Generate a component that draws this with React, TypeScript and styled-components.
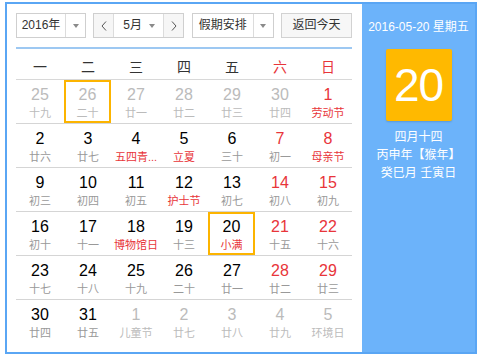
import React from 'react';
import styled, { createGlobalStyle } from 'styled-components';

const GlobalStyle = createGlobalStyle`
  html, body {
    margin: 0;
    padding: 0;
    background: #fff;
  }
  body {
    font-family: "Liberation Sans", "Noto Sans CJK SC", sans-serif;
  }
`;

const Widget = styled.div`
  display: flex;
  box-sizing: border-box;
  width: 472px;
  height: 352px;
  margin: 2px 0 0 5px;
  border: 2px solid #5aa6f4;
`;

const Main = styled.div`
  width: 355px;
  box-sizing: border-box;
  padding: 9px 10px 0 9px;
  background: #fff;
`;

const Toolbar = styled.div`
  display: flex;
  justify-content: space-between;
  height: 25px;
`;

const Box = styled.div<{ $w: number }>`
  display: flex;
  box-sizing: border-box;
  width: ${({ $w }) => $w}px;
  height: 25px;
  border: 1px solid #cfcfcf;
  background: #fff;
  font-size: 12px;
  color: #333;
`;

const BoxLabel = styled.div`
  flex: 1;
  text-align: center;
  line-height: 23px;
`;

const ArrowCell = styled.div`
  display: flex;
  align-items: center;
  justify-content: center;
  width: 19px;
  border-left: 1px solid #dcdcdc;
`;

const Caret = styled.span`
  width: 0;
  height: 0;
  border-left: 3px solid transparent;
  border-right: 3px solid transparent;
  border-top: 4px solid #8a8a8a;
`;

const NavButton = styled.div<{ $side: 'left' | 'right' }>`
  display: flex;
  align-items: center;
  justify-content: center;
  width: 19px;
  background: #f6f6f6;
  ${({ $side }) => ($side === 'left' ? 'border-right' : 'border-left')}: 1px solid #dcdcdc;
`;

const MonthLabel = styled.div`
  flex: 1;
  display: flex;
  align-items: center;
  justify-content: space-between;
  padding: 0 8px 0 9px;
  line-height: 23px;
`;

const TodayButton = styled.div`
  box-sizing: border-box;
  width: 71px;
  height: 25px;
  border: 1px solid #d2d2d2;
  background: #f7f7f7;
  font-size: 12px;
  color: #333;
  text-align: center;
  line-height: 23px;
`;

const Rule = styled.div`
  height: 2px;
  margin-top: 9px;
  background: #9dc8f2;
`;

const WeekRow = styled.div`
  display: grid;
  grid-template-columns: repeat(7, 48px);
  height: 31px;
  box-sizing: border-box;
  border-bottom: 1px solid #d8d8d8;
`;

const WeekDay = styled.div<{ $weekend?: boolean }>`
  padding-top: 8px;
  text-align: center;
  font-size: 14px;
  line-height: 20px;
  color: ${({ $weekend }) => ($weekend ? '#e8353a' : '#333')};
`;

const DayRow = styled.div<{ $last?: boolean }>`
  display: grid;
  grid-template-columns: repeat(7, 48px);
  height: 44px;
  box-sizing: border-box;
  border-bottom: ${({ $last }) => ($last ? 'none' : '1px solid #d5d5d5')};
`;

const Cell = styled.div<{ $marked?: boolean }>`
  width: ${({ $marked }) => ($marked ? '47px' : '48px')};
  height: 43px;
  box-sizing: border-box;
  padding-top: 5px;
  text-align: center;
  box-shadow: ${({ $marked }) => ($marked ? 'inset 0 0 0 2px #fcb400' : 'none')};
`;

const Num = styled.div<{ $tone: 'normal' | 'weekend' | 'other' }>`
  font-size: 16px;
  line-height: 20px;
  color: ${({ $tone }) => ($tone === 'other' ? '#bbb' : $tone === 'weekend' ? '#e8353a' : '#000')};
`;

const Lunar = styled.div<{ $tone: 'normal' | 'festival' | 'other' }>`
  font-size: 11px;
  line-height: 16px;
  white-space: nowrap;
  color: ${({ $tone }) => ($tone === 'other' ? '#bbb' : $tone === 'festival' ? '#e8353a' : '#999')};
`;

const Side = styled.div`
  flex: 1;
  box-sizing: border-box;
  padding-top: 14px;
  background: #6cb3fa;
  color: #fff;
  text-align: center;
`;

const DateLine = styled.div`
  font-size: 12px;
  line-height: 18px;
`;

const BigDay = styled.div`
  width: 66px;
  height: 72px;
  margin: 13px auto 0;
  border-radius: 2px;
  background: #ffb900;
  box-shadow: 0 1px 2px rgba(0, 0, 0, 0.15);
  font-size: 46px;
  line-height: 72px;
  letter-spacing: -1px;
`;

const LunarInfo = styled.div`
  margin-top: 7px;
  font-size: 12px;
  line-height: 18px;
`;

type Day = { n: number; l: string; other?: boolean; fest?: boolean; marked?: boolean };

const weeks: Day[][] = [
  [
    { n: 25, l: '十九', other: true },
    { n: 26, l: '二十', other: true, marked: true },
    { n: 27, l: '廿一', other: true },
    { n: 28, l: '廿二', other: true },
    { n: 29, l: '廿三', other: true },
    { n: 30, l: '廿四', other: true },
    { n: 1, l: '劳动节', fest: true },
  ],
  [
    { n: 2, l: '廿六' },
    { n: 3, l: '廿七' },
    { n: 4, l: '五四青...', fest: true },
    { n: 5, l: '立夏', fest: true },
    { n: 6, l: '三十' },
    { n: 7, l: '初一' },
    { n: 8, l: '母亲节', fest: true },
  ],
  [
    { n: 9, l: '初三' },
    { n: 10, l: '初四' },
    { n: 11, l: '初五' },
    { n: 12, l: '护士节', fest: true },
    { n: 13, l: '初七' },
    { n: 14, l: '初八' },
    { n: 15, l: '初九' },
  ],
  [
    { n: 16, l: '初十' },
    { n: 17, l: '十一' },
    { n: 18, l: '博物馆日', fest: true },
    { n: 19, l: '十三' },
    { n: 20, l: '小满', fest: true, marked: true },
    { n: 21, l: '十五' },
    { n: 22, l: '十六' },
  ],
  [
    { n: 23, l: '十七' },
    { n: 24, l: '十八' },
    { n: 25, l: '十九' },
    { n: 26, l: '二十' },
    { n: 27, l: '廿一' },
    { n: 28, l: '廿二' },
    { n: 29, l: '廿三' },
  ],
  [
    { n: 30, l: '廿四' },
    { n: 31, l: '廿五' },
    { n: 1, l: '儿童节', other: true },
    { n: 2, l: '廿七', other: true },
    { n: 3, l: '廿八', other: true },
    { n: 4, l: '廿九', other: true },
    { n: 5, l: '环境日', other: true },
  ],
];

const weekdays = ['一', '二', '三', '四', '五', '六', '日'];

const Chevron = ({ dir }: { dir: 'left' | 'right' }) => (
  <svg width="6" height="10" viewBox="0 0 6 10">
    <path
      d={dir === 'left' ? 'M5 0.5 L1 5 L5 9.5' : 'M1 0.5 L5 5 L1 9.5'}
      fill="none"
      stroke="#555"
      strokeWidth="1"
    />
  </svg>
);

export default function App() {
  return (
    <>
      <GlobalStyle />
      <Widget>
        <Main>
          <Toolbar>
            <Box $w={70}>
              <BoxLabel>2016年</BoxLabel>
              <ArrowCell>
                <Caret />
              </ArrowCell>
            </Box>
            <Box $w={91}>
              <NavButton $side="left">
                <Chevron dir="left" />
              </NavButton>
              <MonthLabel>
                <span>5月</span>
                <Caret />
              </MonthLabel>
              <NavButton $side="right">
                <Chevron dir="right" />
              </NavButton>
            </Box>
            <Box $w={82}>
              <BoxLabel>假期安排</BoxLabel>
              <ArrowCell>
                <Caret />
              </ArrowCell>
            </Box>
            <TodayButton>返回今天</TodayButton>
          </Toolbar>
          <Rule />
          <WeekRow>
            {weekdays.map((w, i) => (
              <WeekDay key={w} $weekend={i >= 5}>
                {w}
              </WeekDay>
            ))}
          </WeekRow>
          {weeks.map((week, r) => (
            <DayRow key={r} $last={r === weeks.length - 1}>
              {week.map((d, i) => (
                <Cell key={i} $marked={d.marked}>
                  <Num $tone={d.other ? 'other' : i >= 5 ? 'weekend' : 'normal'}>{d.n}</Num>
                  <Lunar $tone={d.other ? 'other' : d.fest ? 'festival' : 'normal'}>{d.l}</Lunar>
                </Cell>
              ))}
            </DayRow>
          ))}
        </Main>
        <Side>
          <DateLine>2016-05-20 星期五</DateLine>
          <BigDay>20</BigDay>
          <LunarInfo>
            <div>四月十四</div>
            <div>丙申年【猴年】</div>
            <div>癸巳月 壬寅日</div>
          </LunarInfo>
        </Side>
      </Widget>
    </>
  );
}
